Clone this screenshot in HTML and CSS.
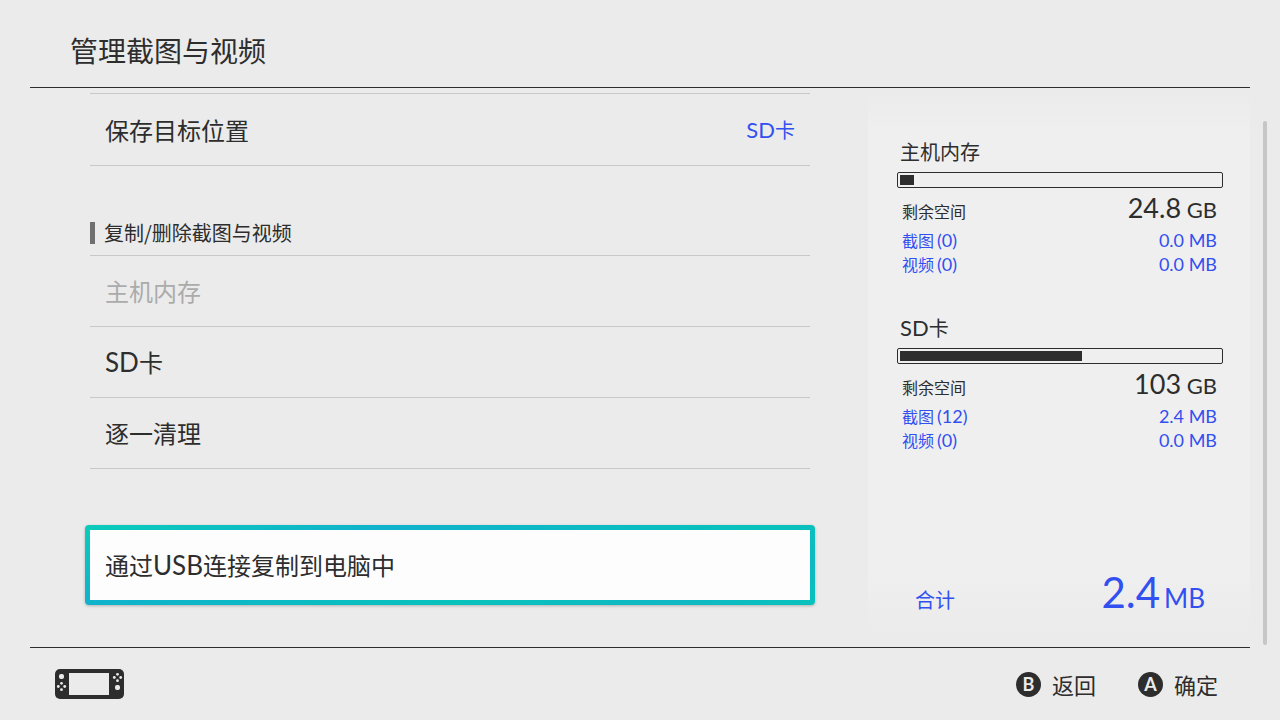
FILE: index.html
```
<!DOCTYPE html>
<html lang="zh-CN">
<head>
    <meta charset="UTF-8">
    <meta name="viewport" content="width=device-width, initial-scale=1.0">
    <title>管理截图与视频</title>
    <link rel="stylesheet" href="styles.css">
</head>
<body>
    <header class="header">
        <h1>管理截图与视频</h1>
    </header>
    <main class="content">
        <div class="menu">
            <button class="row first"><span>保存目标位置</span><span class="value"><span class="latin">SD</span>卡</span></button>
            <h2 class="section">复制/删除截图与视频</h2>
            <button class="row" disabled>主机内存</button>
            <button class="row"><span><span class="latin">SD</span>卡</span></button>
            <button class="row">逐一清理</button>
            <button class="row selected"><span>通过<span class="latin">USB</span>连接复制到电脑中</span></button>
        </div>
        <aside class="storage">
            <section class="drive">
                <h3>主机内存</h3>
                <div class="meter"><div class="fill" style="width: 4.4%"></div></div>
                <dl>
                    <div class="free"><dt>剩余空间</dt><dd><span class="amount">24.8</span> GB</dd></div>
                    <div class="usage"><dt>截图<span class="latin">(0)</span></dt><dd>0.0 MB</dd></div>
                    <div class="usage"><dt>视频<span class="latin">(0)</span></dt><dd>0.0 MB</dd></div>
                </dl>
            </section>
            <section class="drive">
                <h3><span class="latin">SD</span>卡</h3>
                <div class="meter"><div class="fill" style="width: 57%"></div></div>
                <dl>
                    <div class="free"><dt>剩余空间</dt><dd><span class="amount">103</span> GB</dd></div>
                    <div class="usage"><dt>截图<span class="latin">(12)</span></dt><dd>2.4 MB</dd></div>
                    <div class="usage"><dt>视频<span class="latin">(0)</span></dt><dd>0.0 MB</dd></div>
                </dl>
            </section>
            <div class="total">
                <span>合计</span>
                <span class="total-size"><span class="total-number">2.4</span>MB</span>
            </div>
        </aside>
        <div class="scrollbar"></div>
    </main>
    <footer class="footer">
        <svg class="console" width="69" height="30" viewBox="0 0 69 30">
            <rect width="69" height="30" rx="5" fill="#2d2d2d"/>
            <rect x="14" y="4" width="40" height="22" fill="#ebebeb"/>
            <g fill="#ebebeb">
                <rect x="4" y="5" width="5" height="5" rx="2"/>
                <circle cx="6.5" cy="14.3" r="1.4"/>
                <circle cx="6.5" cy="20.7" r="1.4"/>
                <circle cx="3.3" cy="17.5" r="1.4"/>
                <circle cx="9.7" cy="17.5" r="1.4"/>
                <circle cx="62.5" cy="5.3" r="1.4"/>
                <circle cx="62.5" cy="11.7" r="1.4"/>
                <circle cx="59.3" cy="8.5" r="1.4"/>
                <circle cx="65.7" cy="8.5" r="1.4"/>
                <rect x="60" y="16" width="5" height="5" rx="2"/>
            </g>
        </svg>
        <nav class="actions">
            <button class="action"><span class="key">B</span>返回</button>
            <button class="action"><span class="key">A</span>确定</button>
        </nav>
    </footer>
</body>
</html>
```
FILE: styles.css
```
* {
    box-sizing: border-box;
}
body {
    font-family: "Noto Sans CJK SC", sans-serif;
    margin: 0;
    min-height: 100vh;
    display: flex;
    flex-direction: column;
    background-color: #ebebeb;
    color: #2d2d2d;
}
h1, h2, h3, dl, dd {
    margin: 0;
    font-weight: 400;
}
button {
    font-family: inherit;
    color: inherit;
    background: none;
    border: none;
    padding: 0;
    cursor: pointer;
}
.latin {
    font-family: Lato, sans-serif;
    font-size: 26px;
}
.header {
    margin: 0 30px;
    padding: 30px 40px 17px;
    border-bottom: 1px solid #2d2d2d;
}
.header h1 {
    font-size: 28px;
    line-height: 40px;
}
.content {
    flex: 1;
    display: flex;
    padding: 5px 13px 0 90px;
}
.menu {
    flex: 1;
    margin-right: 58px;
}
.row {
    display: flex;
    align-items: center;
    justify-content: space-between;
    width: 100%;
    height: 71px;
    padding: 0 15px;
    border-bottom: 1px solid #c8c8c8;
    font-size: 24px;
    line-height: 36px;
    text-align: left;
}
.row.first {
    height: 73px;
    border-top: 1px solid #c8c8c8;
}
.row:disabled {
    color: #ababab;
    cursor: default;
}
.value {
    font-size: 20px;
    color: #3250f0;
}
.value .latin, h3 .latin {
    font-size: 22px;
}
.section {
    display: flex;
    align-items: center;
    height: 90px;
    padding-top: 45px;
    border-bottom: 1px solid #c8c8c8;
    font-size: 20px;
    line-height: 22px;
}
.section::before {
    content: "";
    width: 5px;
    height: 22px;
    margin-right: 9px;
    background-color: #707070;
}
/* the highlight frame is 5px wider than the list on each side */
.row.selected {
    width: calc(100% + 10px);
    height: 80px;
    margin: 56px -5px 0;
    border: 5px solid transparent;
    border-radius: 4px;
    background:
        linear-gradient(#fdfdfd, #fdfdfd) padding-box,
        linear-gradient(166deg, #0accba, #10b2cc 30%, #08c2bc 65%, #10b8c4 85%, #08c2bc) border-box;
    box-shadow: 0 1px 3px rgba(0, 0, 0, 0.25);
}
.storage {
    width: 382px;
    display: flex;
    flex-direction: column;
    margin-bottom: 15px;
    padding: 44px 27px 7px 29px;
    background: linear-gradient(#ebebeb, #efefef 40px, #efefef 480px, #ebebeb);
}
.drive {
    height: 176px;
}
.drive h3 {
    height: 35px;
    padding-left: 3px;
    font-size: 20px;
    line-height: 30px;
}
.meter {
    height: 16px;
    padding: 2px;
    border: 1px solid #2d2d2d;
    border-radius: 2px;
}
.fill {
    height: 10px;
    background-color: #2d2d2d;
}
dl {
    padding: 3px 6px 0 5px;
}
dl div {
    display: flex;
    align-items: baseline;
    justify-content: space-between;
    font-size: 16px;
    line-height: 24px;
}
dd {
    font-family: Lato, sans-serif;
    font-size: 18px;
}
.usage {
    color: #3250f0;
}
.usage .latin {
    margin-left: 3px;
    font-size: 18px;
}
dl .free {
    line-height: 34px;
}
.free dd {
    font-size: 22px;
}
.amount {
    font-size: 27px;
}
.total {
    display: flex;
    align-items: baseline;
    justify-content: space-between;
    margin-top: auto;
    padding: 0 18px;
    font-size: 20px;
    line-height: 50px;
    color: #3250f0;
}
.total-size {
    font-family: Lato, sans-serif;
    font-size: 26px;
}
.total-number {
    margin-right: 4px;
    font-size: 42px;
}
.scrollbar {
    width: 4px;
    margin: 28px 0 2px 13px;
    border-radius: 2px;
    background-color: #c6c6c6;
}
.footer {
    display: flex;
    align-items: center;
    justify-content: space-between;
    height: 73px;
    margin: 0 30px;
    padding: 0 32px 0 25px;
    border-top: 1px solid #2d2d2d;
}
.actions {
    display: flex;
    gap: 42px;
}
.action {
    display: flex;
    align-items: center;
    gap: 11px;
    font-size: 22px;
    line-height: 32px;
}
.key {
    width: 25px;
    height: 25px;
    border-radius: 50%;
    background-color: #2d2d2d;
    color: #ebebeb;
    font-family: Lato, sans-serif;
    font-size: 18px;
    font-weight: 700;
    line-height: 25px;
    text-align: center;
}
```
